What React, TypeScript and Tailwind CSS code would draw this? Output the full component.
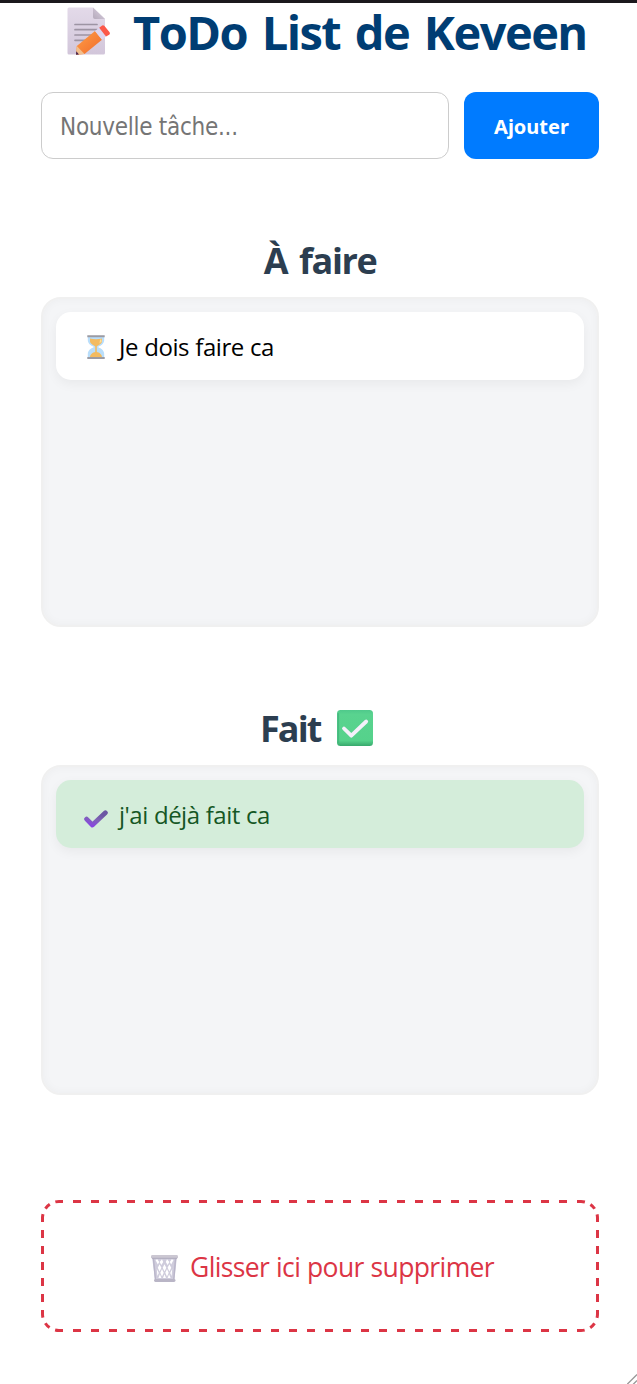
import type { ReactNode } from "react";

function MemoIcon() {
  return (
    <svg viewBox="0 0 43 48" className="h-12 w-[43px] shrink-0" aria-hidden="true">
      <defs>
        <linearGradient id="memo-page" x1="0" y1="0" x2="0" y2="1">
          <stop offset="0" stopColor="#e3dae9" />
          <stop offset="1" stopColor="#d2c6da" />
        </linearGradient>
        <linearGradient id="memo-fold" x1="0" y1="1" x2="1" y2="0">
          <stop offset="0" stopColor="#b5aabb" />
          <stop offset="1" stopColor="#ddd3e3" />
        </linearGradient>
        <linearGradient id="memo-pencil" x1="0" y1="0" x2="1" y2="1">
          <stop offset="0" stopColor="#ffa048" />
          <stop offset="1" stopColor="#f0692a" />
        </linearGradient>
      </defs>
      <path d="M2 .5H26L38 12V46a1.5 1.5 0 0 1-1.5 1.5H2A1.5 1.5 0 0 1 .5 46V2A1.5 1.5 0 0 1 2 .5Z" fill="url(#memo-page)" />
      <path d="M26 .5 38 12H28a2 2 0 0 1-2-2Z" fill="url(#memo-fold)" />
      <path d="M8 17.5H30M8 22.7H30M8 28H26M8 33.3H21" stroke="#9d94a3" strokeWidth="1.7" strokeLinecap="round" />
      <path d="M28 24 35 32.8 17.5 47 9 47.8 9.8 39Z" fill="url(#memo-pencil)" />
      <path d="M9.8 39 17.5 47 9 47.8Z" fill="#f1bf8e" />
      <path d="M9.3 44.2 12 47.5 9 47.8Z" fill="#48204a" />
      <path d="M28 24 32.2 20.8 39 29.6 35 32.8Z" fill="#ded5ee" />
      <path d="M32.2 20.8 34.5 19a2 2 0 0 1 3 .1L42.4 25a2 2 0 0 1-.2 2.7L39 29.6Z" fill="#fb5849" />
    </svg>
  );
}

function HourglassIcon() {
  return (
    <svg viewBox="0 0 18 24" className="h-6 w-[18px] shrink-0" aria-hidden="true">
      <path d="M.8 1.5H17.2V5C17.2 8.5 14.5 10.2 11 12c3.5 1.8 6.2 3.5 6.2 7v3.5H.8V19C.8 15.5 3.5 13.8 7 12 3.5 10.2.8 8.5.8 5Z" fill="#b9defb" />
      <path d="M3 3.5Q9 4.8 15 3.5V6C15 8.7 12 9.7 9.8 11.5V17C12.2 17.4 15 19.2 15 22.5H3C3 19.2 5.8 17.4 8.2 17V11.5C6 9.7 3 8.7 3 6Z" fill="#f3bb60" />
      <path d="M.3 .2H17.7V2.2H.3ZM.3 21.9H17.7V23.9H.3Z" fill="#9b9ba3" />
      <path d="M13 4.5h1.5v2l-2 2Z" fill="#ffe099" />
    </svg>
  );
}

function DoneBadgeIcon() {
  return (
    <svg viewBox="0 0 36 36" className="h-9 w-9 shrink-0" aria-hidden="true">
      <defs>
        <linearGradient id="badge" x1="0" y1="0" x2="0" y2="1">
          <stop offset="0" stopColor="#4fc98b" />
          <stop offset=".12" stopColor="#59d38f" />
          <stop offset=".85" stopColor="#55d28b" />
          <stop offset="1" stopColor="#37a86c" />
        </linearGradient>
      </defs>
      <rect width="36" height="36" rx="3.5" fill="url(#badge)" />
      <path d="M1.2 4V32" stroke="#3fae79" strokeWidth="1.8" strokeLinecap="round" opacity=".65" />
      <path d="M7 18.5 14.3 25.7 29.2 11.5" fill="none" stroke="#f4f0fa" strokeWidth="3.8" strokeLinecap="round" strokeLinejoin="round" />
    </svg>
  );
}

function CheckIcon() {
  return (
    <svg viewBox="0 0 24 18" className="h-[18px] w-6 shrink-0" aria-hidden="true">
      <defs>
        <linearGradient id="tick" x1="0" y1="1" x2=".5" y2="0">
          <stop offset="0" stopColor="#8944e4" />
          <stop offset=".55" stopColor="#8062b8" />
          <stop offset="1" stopColor="#6c57a3" />
        </linearGradient>
      </defs>
      <path d="M2.6 9.1 8.4 15 21.4 2.8" fill="none" stroke="url(#tick)" strokeWidth="4.8" strokeLinecap="round" strokeLinejoin="round" />
    </svg>
  );
}

function TrashIcon() {
  return (
    <svg viewBox="0 0 27 27" className="h-[27px] w-[27px] shrink-0" aria-hidden="true">
      <path d="M1.2 3H25.8L23.4 25H4Z" fill="#cfccdc" />
      <path
        d="M6.3 4.2 8.2 7 6.8 9.5 4.5 5ZM11 4.2 12.2 7 10.4 10 8.6 7ZM16 4.2 18.4 7 16.6 10 14.8 7ZM20.7 4.2 22.5 5 20.2 9.5 18.8 7ZM8.6 9.2 10.4 12.8 8.6 16.4 6.8 12.8ZM13.5 9.2 15.3 12.8 13.5 16.4 11.7 12.8ZM18.4 9.2 20.2 12.8 18.4 16.4 16.6 12.8ZM5.8 14 7.8 18 6.4 21ZM11 14 12.7 17.8 11 21.6 9.3 17.8ZM16 14 17.7 17.8 16 21.6 14.3 17.8ZM21.2 14 20.6 21 19.2 18ZM8.9 19.2 10.4 23H7.4ZM13.5 19.2 15 23H12ZM18.1 19.2 19.6 23H16.6Z"
        fill="#fff"
      />
      <path d="M2.4 3 4.4 24M24.6 3 22.8 24" stroke="#b9b5c9" strokeWidth="1.4" />
      <rect y="0" width="27" height="3.6" rx="1.4" fill="#cbc7d2" />
      <rect x="1" y="2.8" width="25" height="1" fill="#aeabbd" />
      <rect x="3" y="24" width="21.5" height="3" rx="1.4" fill="#b9b5c6" />
    </svg>
  );
}

function DashedOutline() {
  return (
    <svg viewBox="0 0 558 132" className="pointer-events-none absolute inset-0 h-[132px] w-[558px]" fill="none" stroke="#dc3545" strokeWidth="3" aria-hidden="true">
      <path d="M18 1.5H540M18 130.5H540" strokeDasharray="8 10" strokeDashoffset="4" />
      <path d="M1.5 18V114M556.5 18V114" strokeDasharray="8 8" strokeDashoffset="4" />
      <path
        d="M1.5 18A16.5 16.5 0 0 1 18 1.5M540 1.5A16.5 16.5 0 0 1 556.5 18M556.5 114A16.5 16.5 0 0 1 540 130.5M18 130.5A16.5 16.5 0 0 1 1.5 114"
        strokeDasharray="4 6 6 6 4 100"
      />
    </svg>
  );
}

function Column({ title, children }: { title: ReactNode; children: ReactNode }) {
  return (
    <section>
      <h2 className="flex h-12 items-center justify-center text-[36px] leading-[48px] font-bold text-[#2c3e50]">{title}</h2>
      <ul className="mt-3 h-[330px] rounded-[20px] border-2 border-[#f0f0f0] bg-[#f4f5f7] p-[13px] shadow-[inset_0_0_10px_rgba(0,0,0,0.035)]">
        {children}
      </ul>
    </section>
  );
}

export default function App() {
  return (
    <div className="relative h-[1384px] w-[637px] border-t-[3px] border-[#1b181d] bg-white pr-[38px] pl-[41px] font-['Open_Sans','Noto_Sans',sans-serif]">
      <header className="flex h-[57px] items-center pl-[26px]">
        <span className="pb-px">
          <MemoIcon />
        </span>
        <h1 className="ml-[23px] text-[47px] leading-[56px] font-bold tracking-[-1.55px] [word-spacing:4px] whitespace-nowrap text-[#003d73]">
          ToDo List de Keveen
        </h1>
      </header>

      <form className="mt-8 flex gap-[15px]" onSubmit={(e) => e.preventDefault()}>
        <input
          type="text"
          placeholder="Nouvelle tâche..."
          className="h-[67px] w-[408px] rounded-xl border border-[#ccc] px-[18px] pt-[3px] font-['DejaVu_Sans_Condensed','DejaVu_Sans',sans-serif] text-[24px] tracking-[-0.27px] outline-none placeholder:text-[#757575]"
        />
        <button className="h-[67px] w-[135px] rounded-xl bg-[#007bff] pt-0.5 font-['Noto_Sans',sans-serif] text-[20px] font-bold text-white">Ajouter</button>
      </form>

      <main className="mt-[78px] flex flex-col gap-[78px]">
        <Column title={<span className="tracking-[-1.4px] [word-spacing:4px]">À faire</span>}>
          <li className="flex h-[68px] items-center rounded-[15px] bg-white pt-0.5 pl-[31px] shadow-[0_4px_12px_rgba(0,0,0,0.05)]">
            <HourglassIcon />
            <span className="ml-[14px] text-[24px] tracking-[-0.46px] [word-spacing:0.5px] text-black">Je dois faire ca</span>
          </li>
        </Column>
        <Column
          title={
            <div className="mr-[7px] flex w-[113px] items-center justify-between">
              <span className="tracking-[-1.9px]">Fait</span>
              <span className="pb-0.5">
                <DoneBadgeIcon />
              </span>
            </div>
          }
        >
          <li className="flex h-[68px] items-center rounded-[15px] bg-[#d4edda] pt-0.5 pl-7 shadow-[0_4px_12px_rgba(0,0,0,0.05)]">
            <span className="mt-2">
              <CheckIcon />
            </span>
            <span className="ml-[11px] text-[24px] tracking-[-0.5px] [word-spacing:0.5px] text-[#155724]">j'ai déjà fait ca</span>
          </li>
        </Column>
      </main>

      <div className="relative mt-[105px] flex h-[132px] items-center pt-1 pl-[110px] text-[#dc3545]">
        <DashedOutline />
        <TrashIcon />
        <span className="ml-3 text-[26.5px] tracking-[-0.62px] [word-spacing:0.5px] whitespace-nowrap">Glisser ici pour supprimer</span>
      </div>

      <svg viewBox="0 0 10 10" className="absolute right-0 bottom-0 h-2.5 w-2.5" aria-hidden="true">
        <path d="M0 10.5 10 .5M6 10.5 10 6.5" stroke="#999" strokeWidth="1.3" />
      </svg>
    </div>
  );
}
